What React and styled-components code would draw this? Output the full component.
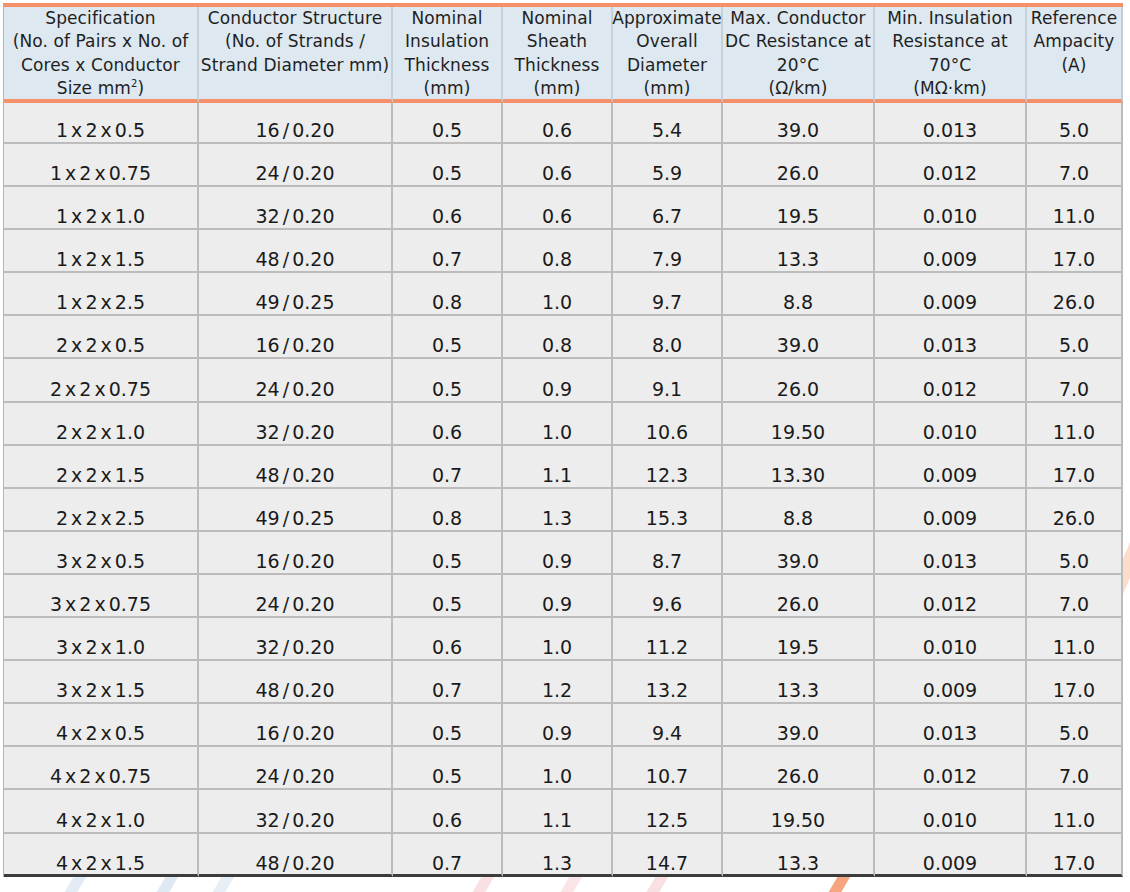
import React from "react";
import styled, { createGlobalStyle } from "styled-components";

const GlobalStyle = createGlobalStyle`
  html, body {
    margin: 0;
    padding: 0;
    background: #ffffff;
  }
  body {
    font-family: "DejaVu Sans", "Liberation Sans", sans-serif;
    color: #1c1c1c;
  }
`;

const COLS = [195, 194, 110, 110, 110, 152, 152, 96];

const HEADERS = [
  ["Specification", "(No. of Pairs x No. of", "Cores x Conductor", <>Size mm<sup>2</sup>)</>],
  ["Conductor Structure", "(No. of Strands /", "Strand Diameter mm)"],
  ["Nominal", "Insulation", "Thickness", "(mm)"],
  ["Nominal", "Sheath", "Thickness", "(mm)"],
  ["Approximate", "Overall", "Diameter", "(mm)"],
  ["Max. Conductor", "DC Resistance at", "20°C", "(Ω/km)"],
  ["Min. Insulation", "Resistance at", "70°C", "(MΩ·km)"],
  ["Reference", "Ampacity", "(A)"],
];

const ROWS = [
  ["1 x 2 x 0.5", "16 / 0.20", "0.5", "0.6", "5.4", "39.0", "0.013", "5.0"],
  ["1 x 2 x 0.75", "24 / 0.20", "0.5", "0.6", "5.9", "26.0", "0.012", "7.0"],
  ["1 x 2 x 1.0", "32 / 0.20", "0.6", "0.6", "6.7", "19.5", "0.010", "11.0"],
  ["1 x 2 x 1.5", "48 / 0.20", "0.7", "0.8", "7.9", "13.3", "0.009", "17.0"],
  ["1 x 2 x 2.5", "49 / 0.25", "0.8", "1.0", "9.7", "8.8", "0.009", "26.0"],
  ["2 x 2 x 0.5", "16 / 0.20", "0.5", "0.8", "8.0", "39.0", "0.013", "5.0"],
  ["2 x 2 x 0.75", "24 / 0.20", "0.5", "0.9", "9.1", "26.0", "0.012", "7.0"],
  ["2 x 2 x 1.0", "32 / 0.20", "0.6", "1.0", "10.6", "19.50", "0.010", "11.0"],
  ["2 x 2 x 1.5", "48 / 0.20", "0.7", "1.1", "12.3", "13.30", "0.009", "17.0"],
  ["2 x 2 x 2.5", "49 / 0.25", "0.8", "1.3", "15.3", "8.8", "0.009", "26.0"],
  ["3 x 2 x 0.5", "16 / 0.20", "0.5", "0.9", "8.7", "39.0", "0.013", "5.0"],
  ["3 x 2 x 0.75", "24 / 0.20", "0.5", "0.9", "9.6", "26.0", "0.012", "7.0"],
  ["3 x 2 x 1.0", "32 / 0.20", "0.6", "1.0", "11.2", "19.5", "0.010", "11.0"],
  ["3 x 2 x 1.5", "48 / 0.20", "0.7", "1.2", "13.2", "13.3", "0.009", "17.0"],
  ["4 x 2 x 0.5", "16 / 0.20", "0.5", "0.9", "9.4", "39.0", "0.013", "5.0"],
  ["4 x 2 x 0.75", "24 / 0.20", "0.5", "1.0", "10.7", "26.0", "0.012", "7.0"],
  ["4 x 2 x 1.0", "32 / 0.20", "0.6", "1.1", "12.5", "19.50", "0.010", "11.0"],
  ["4 x 2 x 1.5", "48 / 0.20", "0.7", "1.3", "14.7", "13.3", "0.009", "17.0"],
];

// faint watermark strokes peeking out round the table
const STRIPES = [
  { x: 78, color: "#e3ecf5" },
  { x: 170, color: "#dfe9f4" },
  { x: 226, color: "#e6eef6" },
  { x: 486, color: "#f9e0e3" },
  { x: 574, color: "#fae4e6" },
  { x: 660, color: "#f9e0e3" },
  { x: 842, color: "#f6a57f" },
];

export default function App() {
  return (
    <Page>
      <GlobalStyle />
      <Watermark width="1130" height="892" viewBox="0 0 1130 892">
        {STRIPES.map((s, i) => (
          <line
            key={i}
            x1={s.x - 14}
            y1={904}
            x2={s.x + 14}
            y2={856}
            stroke={s.color}
            strokeWidth="11"
          />
        ))}
        <line x1="1100" y1="630" x2="1160" y2="490" stroke="#fcdcca" strokeWidth="14" />
      </Watermark>
      <Grid>
        {HEADERS.map((lines, i) => (
          <HeadCell key={i} last={i === HEADERS.length - 1}>
            {lines.map((l, j) => (
              <HeadLine key={j}>{l}</HeadLine>
            ))}
          </HeadCell>
        ))}
        {ROWS.map((row, r) =>
          row.map((v, c) => (
            <Cell
              key={r + "-" + c}
              first={r === 0}
              bottom={r === ROWS.length - 1}
            >
              {v}
            </Cell>
          ))
        )}
      </Grid>
    </Page>
  );
}

const Page = styled.div`
  position: relative;
  width: 1130px;
  height: 892px;
  padding: 3px 0 0 3px;
  box-sizing: border-box;
  overflow: hidden;
`;

const Watermark = styled.svg`
  position: absolute;
  left: 0;
  top: 0;
  z-index: 0;
`;

const Grid = styled.div`
  position: relative;
  z-index: 1;
  display: grid;
  grid-template-columns: ${COLS.map((w) => w + "px").join(" ")};
  width: max-content;
  border-top: 4px solid #f4916b;
  border-left: 1px solid #b4b4b4;
`;

const HeadCell = styled.div`
  box-sizing: border-box;
  height: 96px;
  background: #dde8f0;
  border-bottom: 4px solid #f4916b;
  border-right: 2px solid ${({ last }) => (last ? "#c3ccd3" : "#c7d0d7")};
  display: flex;
  flex-direction: column;
  align-items: center;
  font-size: 17px;
  line-height: 23.3px;
  color: #1f1f1f;
  overflow: visible;

  sup {
    font-size: 10px;
    line-height: 0;
    vertical-align: 7px;
  }
`;

const HeadLine = styled.div`
  white-space: nowrap;
  text-align: center;
  letter-spacing: 0.1px;
`;

const Cell = styled.div`
  box-sizing: border-box;
  height: ${({ first }) => (first ? "41px" : "43.1px")};
  background: #ededed;
  border-right: 2px solid #bcbcbc;
  border-bottom: ${({ bottom }) =>
    bottom ? "3px solid #3c3c3c" : "2px solid #bcbcbc"};
  display: flex;
  align-items: flex-end;
  justify-content: center;
  padding-bottom: ${({ bottom }) => (bottom ? "0px" : "1px")};
  font-size: 19px;
  line-height: 22px;
  word-spacing: -3px;
  color: #1a1a1a;
  white-space: nowrap;
`;
